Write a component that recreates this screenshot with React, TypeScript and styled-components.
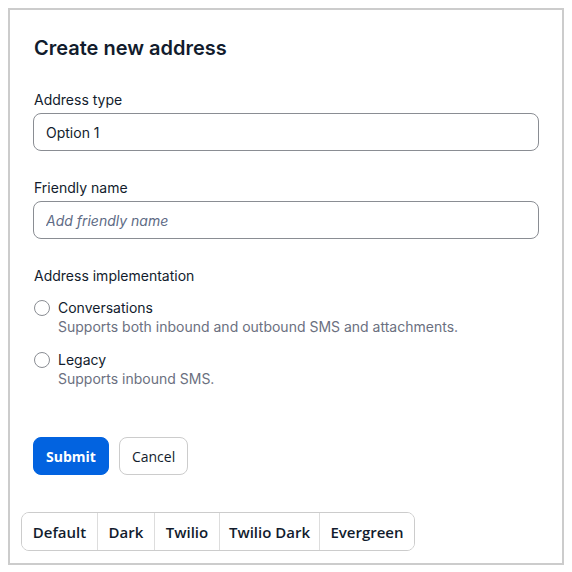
import React from "react";
import styled, { createGlobalStyle } from "styled-components";

const Global = createGlobalStyle`
  body {
    margin: 8px;
    background: #ffffff;
    font-family: Inter, "Noto Sans", sans-serif;
    color: #121c2d;
  }
  * { box-sizing: border-box; }
`;

const Frame = styled.div`
  width: 556px;
  height: 557px;
  border: 2px solid #cccccc;
  display: flex;
  flex-direction: column;
`;

const Form = styled.form`
  padding: 24px 23px 0 23px;
  display: flex;
  flex-direction: column;
`;

const Title = styled.h1`
  margin: 0 0 28px 1px;
  font-size: 20px;
  line-height: 28px;
  font-weight: 600;
`;

const Field = styled.div<{ $gap?: number }>`
  display: flex;
  flex-direction: column;
  margin-bottom: ${(p) => p.$gap ?? 27}px;
`;

const Label = styled.label`
  font-size: 14px;
  line-height: 20px;
  font-weight: 400;
  margin: 0 0 3px 1px;
`;

const Input = styled.input`
  height: 38px;
  border: 1px solid #8a8d93;
  border-radius: 8px;
  padding: 0 12px;
  font-family: Inter, "Noto Sans", sans-serif;
  font-size: 14px;
  color: #121c2d;
  outline: none;
  &::placeholder {
    color: #606b85;
    font-style: italic;
  }
`;

const Legend = styled.div`
  font-size: 14px;
  line-height: 20px;
  font-weight: 400;
  margin: 0 0 12px 1px;
`;

const RadioRow = styled.label`
  display: flex;
  gap: 8px;
  margin: 0 0 14px 1px;
`;

const Circle = styled.span`
  width: 16px;
  height: 16px;
  border: 1px solid #8a8d93;
  border-radius: 50%;
  margin-top: 2px;
  flex-shrink: 0;
`;

const RadioText = styled.div`
  display: flex;
  flex-direction: column;
`;

const RadioTitle = styled.span`
  font-size: 14px;
  line-height: 20px;
  font-weight: 400;
`;

const RadioHelp = styled.span`
  font-size: 14px;
  line-height: 18px;
  color: #6b7080;
`;

const Actions = styled.div`
  display: flex;
  gap: 10px;
  margin-top: 35px;
`;

const Button = styled.button<{ $primary?: boolean }>`
  height: 38px;
  padding: 0 12px;
  border-radius: 8px;
  border: 1px solid ${(p) => (p.$primary ? "#0263e0" : "#cccccc")};
  background: ${(p) => (p.$primary ? "#0263e0" : "#ffffff")};
  color: ${(p) => (p.$primary ? "#ffffff" : "#121c2d")};
  font-family: "Open Sans", "Noto Sans", sans-serif;
  font-size: 14px;
  font-weight: ${(p) => (p.$primary ? 700 : 500)};
`;

const ThemeBar = styled.div`
  display: inline-flex;
  align-self: flex-start;
  margin: 37px 0 0 11px;
  border: 1px solid #cccccc;
  border-radius: 8px;
  overflow: hidden;
`;

const ThemeButton = styled.button<{ $w: number }>`
  width: ${(p) => p.$w}px;
  height: 37px;
  border: none;
  border-left: 1px solid #dddddd;
  background: #ffffff;
  font-family: "Open Sans", "Noto Sans", sans-serif;
  font-size: 15px;
  font-weight: 600;
  color: #121c2d;
  &:first-child {
    border-left: none;
  }
`;

const themes: [string, number][] = [
  ["Default", 75],
  ["Dark", 57],
  ["Twilio", 65],
  ["Twilio Dark", 100],
  ["Evergreen", 95],
];

export default function App() {
  return (
    <>
      <Global />
      <Frame>
        <Form onSubmit={(e) => e.preventDefault()}>
          <Title>Create new address</Title>
          <Field>
            <Label>Address type</Label>
            <Input defaultValue="Option 1" />
          </Field>
          <Field>
            <Label>Friendly name</Label>
            <Input placeholder="Add friendly name" />
          </Field>
          <Legend>Address implementation</Legend>
          <RadioRow>
            <Circle />
            <RadioText>
              <RadioTitle>Conversations</RadioTitle>
              <RadioHelp>Supports both inbound and outbound SMS and attachments.</RadioHelp>
            </RadioText>
          </RadioRow>
          <RadioRow>
            <Circle />
            <RadioText>
              <RadioTitle>Legacy</RadioTitle>
              <RadioHelp>Supports inbound SMS.</RadioHelp>
            </RadioText>
          </RadioRow>
          <Actions>
            <Button $primary type="submit">Submit</Button>
            <Button type="button">Cancel</Button>
          </Actions>
        </Form>
        <ThemeBar>
          {themes.map(([name, w]) => (
            <ThemeButton key={name} $w={w}>{name}</ThemeButton>
          ))}
        </ThemeBar>
      </Frame>
    </>
  );
}
